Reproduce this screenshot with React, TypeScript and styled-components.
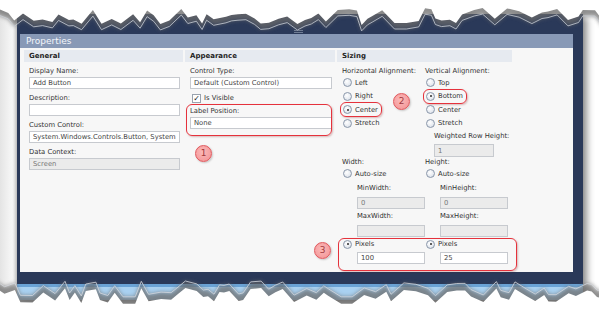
import React from 'react'
import styled, { createGlobalStyle, css } from 'styled-components'

const GlobalStyle = createGlobalStyle`
  html, body {
    margin: 0;
    padding: 0;
    background: #ffffff;
  }
  * {
    box-sizing: border-box;
  }
`

const FONT = `"DejaVu Sans", Verdana, sans-serif`

const seeded = (seed: number) => {
  let s = seed
  return () => {
    s = (s * 16807) % 2147483647
    return s / 2147483647
  }
}

const tear = (seed: number, yMin: number, yMax: number) => {
  const rand = seeded(seed)
  const pts: [number, number][] = []
  let x = -4
  while (x < 605) {
    pts.push([x, yMin + rand() * (yMax - yMin)])
    x += 4 + rand() * 9
  }
  pts.push([605, yMin + rand() * (yMax - yMin)])
  return pts
}

const topEdge = tear(7, 14, 31)
const bottomEdge = tear(19, 281, 297)

const toStr = (pts: [number, number][], dy = 0) =>
  pts.map(([x, y]) => `${x.toFixed(1)},${(y + dy).toFixed(1)}`).join(' ')

const Properties: React.FC = () => {
  return (
    <>
      <GlobalStyle />
      <Stage>
        <Frame>
          <Grip>
            <GripLine />
            <GripLine />
          </Grip>
          <Panel>
            <TitleBar>Properties</TitleBar>
            <Body>
              <Columns>
                <Column>
                  <Header>General</Header>
                  <ColumnBody>
                    <Field>
                      <Label>Display Name:</Label>
                      <Input width={151} readOnly value="Add Button" />
                    </Field>
                    <Field>
                      <Label>Description:</Label>
                      <Input width={151} readOnly value="" />
                    </Field>
                    <Field>
                      <Label>Custom Control:</Label>
                      <Input width={151} readOnly value="System.Windows.Controls.Button, System.Windows" />
                    </Field>
                    <Field>
                      <Label>Data Context:</Label>
                      <Input width={151} readOnly disabled value="Screen" />
                    </Field>
                  </ColumnBody>
                </Column>

                <Column>
                  <Header>Appearance</Header>
                  <ColumnBody>
                    <Field>
                      <Label>Control Type:</Label>
                      <Input width={142} readOnly value="Default (Custom Control)" />
                    </Field>
                    <CheckRow>
                      <CheckBox>✓</CheckBox>
                      <span>Is Visible</span>
                    </CheckRow>
                    <HighlightField>
                      <Label>Label Position:</Label>
                      <Input width={142} readOnly value="None" />
                    </HighlightField>
                    <FlowBadge>1</FlowBadge>
                  </ColumnBody>
                </Column>

                <SizingColumn>
                  <Header>Sizing</Header>
                  <ColumnBody>
                    <TwoCols>
                      <SubColumn>
                        <Label>Horizontal Alignment:</Label>
                        <Radio label="Left" />
                        <Radio label="Right" />
                        <Radio label="Center" checked highlight />
                        <Radio label="Stretch" />
                      </SubColumn>
                      <SubColumn>
                        <Label>Vertical Alignment:</Label>
                        <Radio label="Top" />
                        <Radio label="Bottom" checked highlight />
                        <Radio label="Center" />
                        <Radio label="Stretch" />
                      </SubColumn>
                    </TwoCols>
                    <Weighted>
                      <SmallLabel>Weighted Row Height:</SmallLabel>
                      <Input width={60} tall readOnly disabled value="1" />
                    </Weighted>
                    <TwoCols>
                      <SubColumn>
                        <DimLabel>Width:</DimLabel>
                        <Radio label="Auto-size" />
                        <Indent>
                          <SmallLabel>MinWidth:</SmallLabel>
                          <Input width={68} readOnly disabled value="0" />
                          <SmallLabel>MaxWidth:</SmallLabel>
                          <Input width={68} readOnly disabled value="" />
                        </Indent>
                      </SubColumn>
                      <SubColumn>
                        <DimLabel>Height:</DimLabel>
                        <Radio label="Auto-size" />
                        <Indent>
                          <SmallLabel>MinHeight:</SmallLabel>
                          <Input width={68} readOnly disabled value="0" />
                          <SmallLabel>MaxHeight:</SmallLabel>
                          <Input width={68} readOnly disabled value="" />
                        </Indent>
                      </SubColumn>
                    </TwoCols>
                    <PixelsGrid>
                      <SubColumn>
                        <Radio label="Pixels" checked />
                        <Indent>
                          <Input width={68} readOnly value="100" />
                        </Indent>
                      </SubColumn>
                      <SubColumn>
                        <Radio label="Pixels" checked />
                        <Indent>
                          <Input width={68} readOnly value="25" />
                        </Indent>
                      </SubColumn>
                    </PixelsGrid>
                  </ColumnBody>
                  <Badge left={56} top={43}>2</Badge>
                  <Badge left={-23} top={192}>3</Badge>
                </SizingColumn>
              </Columns>
            </Body>
          </Panel>
        </Frame>

        <TearOverlay width="599" height="309" viewBox="0 0 599 309">
          <defs>
            <filter id="soft" x="-5%" y="-50%" width="110%" height="200%">
              <feGaussianBlur stdDeviation="2.2" />
            </filter>
          </defs>
          <polygon points={`-5,-5 ${toStr(topEdge)} 605,-5`} fill="#6b6b6b" filter="url(#soft)" opacity="0.75" />
          <polygon points={`-5,-5 ${toStr(topEdge, -6)} 605,-5`} fill="#ffffff" />
          <polyline points={toStr(topEdge)} fill="none" stroke="#c9ced6" strokeWidth="0.8" />

          <polygon points={`-5,315 ${toStr(bottomEdge)} 605,315`} fill="#6b6b6b" filter="url(#soft)" opacity="0.75" />
          <polygon points={`-5,315 ${toStr(bottomEdge, 7)} 605,315`} fill="#ffffff" />
          <polyline points={toStr(bottomEdge)} fill="none" stroke="#d4d8de" strokeWidth="0.8" />
        </TearOverlay>
      </Stage>
    </>
  )
}

type RadioProps = { label: string; checked?: boolean; highlight?: boolean }

const Radio: React.FC<RadioProps> = ({ label, checked, highlight }) => (
  <RadioRow>
    <RadioItem highlight={highlight}>
      <RadioCircle checked={checked} />
      <span>{label}</span>
    </RadioItem>
  </RadioRow>
)

export default Properties

const Stage = styled.div`
  position: relative;
  width: 599px;
  height: 309px;
  overflow: hidden;
  padding: 14px 0 0 17px;
  font-family: ${FONT};
  background: linear-gradient(to right, #e4e4e4 0px, #f4f4f4 10px, #ffffff 14px);
`

const Frame = styled.div`
  width: 566px;
  height: 286px;
  padding: 15px 10px 0 3px;
  background: linear-gradient(#2a3959 0 270px, #6aa3d6 270px 273px, #a9d1f1 273px);
  box-shadow: 4px 3px 7px rgba(0, 0, 0, 0.45), -2px 0 4px rgba(0, 0, 0, 0.25);
  display: flex;
  flex-direction: column;
`

const Grip = styled.div`
  height: 5px;
  display: flex;
  flex-direction: column;
  align-items: center;
  justify-content: center;
  gap: 1px;
  padding-left: 4px;
`

const GripLine = styled.div`
  width: 9px;
  height: 1px;
  background: #6f7d96;
`

const Panel = styled.div`
  display: flex;
  flex-direction: column;
`

const TitleBar = styled.div`
  height: 14px;
  line-height: 14px;
  padding-left: 6px;
  background: #8899b6;
  color: #f2f5fa;
  font-size: 9px;
`

const Body = styled.div`
  height: 224px;
  padding: 2px 3px 0 4px;
  background: #f7f7f7;
`

const Columns = styled.div`
  display: grid;
  grid-template-columns: 159px 150px 175px;
  column-gap: 2px;
  align-items: start;
`

const Column = styled.div`
  display: flex;
  flex-direction: column;
`

const SizingColumn = styled(Column)`
  position: relative;
`

const Header = styled.div`
  height: 12px;
  line-height: 12px;
  padding-left: 5px;
  background: #e6eaf0;
  color: #1f1f1f;
  font-size: 7px;
  font-weight: 700;
`

const ColumnBody = styled.div`
  display: flex;
  flex-direction: column;
  padding: 5px 0 0 5px;
  font-size: 6.8px;
  color: #333;
`

const Field = styled.div`
  display: flex;
  flex-direction: column;
  margin-bottom: 5px;
`

const highlightBox = css`
  content: '';
  position: absolute;
  border: 1.5px solid #e5323c;
  border-radius: 6px;
  box-shadow: 1px 1px 2px rgba(120, 0, 0, 0.25);
  pointer-events: none;
`

const HighlightField = styled(Field)`
  position: relative;
  &::after {
    ${highlightBox};
    top: -3px;
    bottom: -7px;
    left: -4px;
    right: 3px;
  }
`

const Label = styled.div`
  height: 9px;
  line-height: 9px;
  font-size: 6.8px;
  color: #333;
  white-space: nowrap;
`

const SmallLabel = styled(Label)`
  margin-top: 3px;
  margin-bottom: 3px;
`

const DimLabel = styled(Label)`
  margin-top: 1px;
`

const Input = styled.input<{ width: number; tall?: boolean }>`
  width: ${({ width }) => width}px;
  height: ${({ tall }) => (tall ? 13 : 12)}px;
  margin: 1px 0 0 0;
  padding: 0 3px;
  border: 1px solid #c7cacf;
  border-radius: 0;
  background: ${({ disabled }) => (disabled ? '#ebebeb' : '#ffffff')};
  color: ${({ disabled }) => (disabled ? '#777' : '#444')};
  font-family: ${FONT};
  font-size: 6.8px;
  outline: none;
  &:disabled {
    color: #777;
  }
`

const CheckRow = styled.div`
  display: flex;
  align-items: center;
  gap: 3px;
  height: 10px;
  margin: -1px 0 4px 2px;
`

const CheckBox = styled.span`
  width: 9px;
  height: 9px;
  border: 1px solid #9aa3ae;
  background: #fff;
  font-size: 8px;
  line-height: 7px;
  text-align: center;
  color: #222;
`

const TwoCols = styled.div`
  display: grid;
  grid-template-columns: 83px 1fr;
`

const PixelsGrid = styled(TwoCols)`
  position: relative;
  margin-top: 1px;
  &::after {
    ${highlightBox};
    top: 0;
    bottom: -7px;
    left: -4px;
    right: -5px;
  }
`

const SubColumn = styled.div`
  display: flex;
  flex-direction: column;
  align-items: flex-start;
`

const Indent = styled.div`
  display: flex;
  flex-direction: column;
  margin-left: 15px;
`

const Weighted = styled.div`
  display: flex;
  flex-direction: column;
  margin-left: 92px;
  margin-top: -1px;
  & > ${SmallLabel} {
    margin-bottom: 2px;
  }
`

const RadioRow = styled.div`
  height: 13.5px;
  display: flex;
  align-items: center;
`

const RadioItem = styled.div<{ highlight?: boolean }>`
  position: relative;
  display: inline-flex;
  align-items: center;
  gap: 3px;
  padding-left: 1px;
  ${({ highlight }) =>
    highlight &&
    css`
      &::after {
        ${highlightBox};
        border-radius: 6px;
        top: -3px;
        bottom: -3px;
        left: -2px;
        right: -4px;
      }
    `}
`

const RadioCircle = styled.span<{ checked?: boolean }>`
  position: relative;
  width: 9px;
  height: 9px;
  border-radius: 50%;
  border: 1px solid #8a97aa;
  background: radial-gradient(circle at 40% 35%, #ffffff 0%, #e6eaf0 60%, #cdd4de 100%);
  &::after {
    content: '';
    display: ${({ checked }) => (checked ? 'block' : 'none')};
    position: absolute;
    left: 2.5px;
    top: 2.5px;
    width: 2px;
    height: 2px;
    border-radius: 50%;
    background: #2b2b2b;
  }
`

const badgeLook = css`
  width: 17px;
  height: 17px;
  border-radius: 50%;
  border: 1px solid #e0575c;
  background: radial-gradient(circle at 45% 40%, #fbb9b9 0%, #f59d9e 70%, #ef8c8e 100%);
  color: #a23a3c;
  font-family: ${FONT};
  font-size: 9px;
  line-height: 15px;
  text-align: center;
  box-shadow: 1px 1px 2px rgba(0, 0, 0, 0.2);
`

const FlowBadge = styled.div`
  ${badgeLook};
  margin: 11px 0 0 5px;
`

const Badge = styled.div<{ left: number; top: number }>`
  ${badgeLook};
  position: absolute;
  left: ${({ left }) => left}px;
  top: ${({ top }) => top}px;
`

const TearOverlay = styled.svg`
  position: absolute;
  left: 0;
  top: 0;
  pointer-events: none;
`
